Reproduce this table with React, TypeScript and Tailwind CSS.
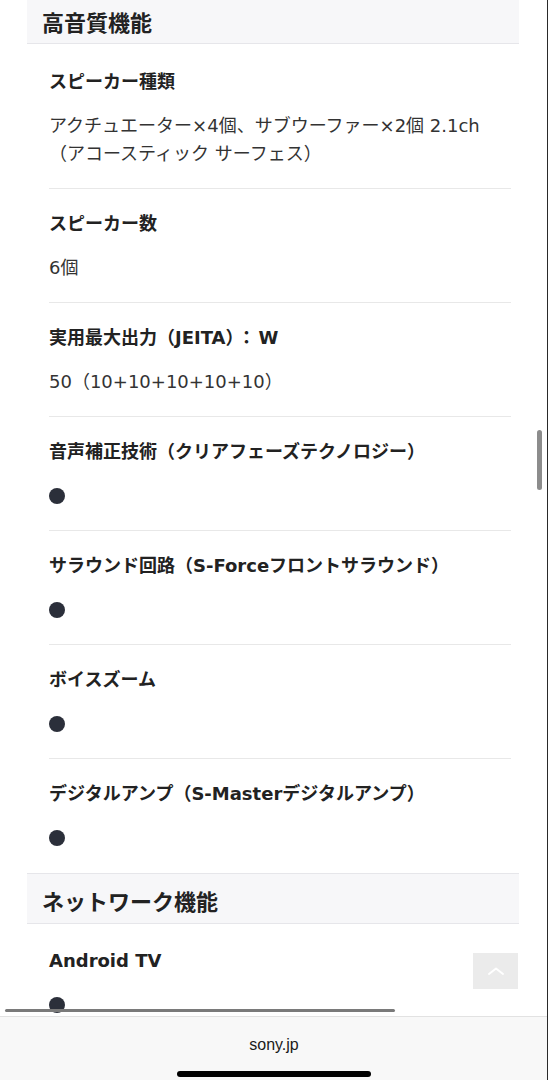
import React from "react";

const FONT = '"DejaVu Sans", "Noto Sans CJK JP", sans-serif';

function SectionHeader({ title, className = "" }: { title: string; className?: string }) {
  return (
    <div
      className={`bg-[#f7f7f9] border-y border-[#e6e6ea] pl-[15px] pt-[12px] text-[22px] leading-[28px] font-bold text-[#222] ${className}`}
      style={{ fontFamily: '"Noto Sans CJK JP", sans-serif' }}
    >
      {title}
    </div>
  );
}

function Bullet() {
  return (
    <div className="h-[28px] flex items-center">
      <div className="w-[16px] h-[16px] rounded-full bg-[#2b2f3a]" />
    </div>
  );
}

function Row({
  title,
  children,
  top = "pt-[21px]",
  last = false,
}: {
  title: React.ReactNode;
  children: React.ReactNode;
  top?: string;
  last?: boolean;
}) {
  return (
    <div
      className={`ml-[22px] mr-[8px] pb-[20px] ${top} ${last ? "" : "border-b border-[#e8e8e8]"}`}
    >
      <div className="text-[18px] leading-[28px] font-bold text-[#222]">{title}</div>
      <div className="mt-[16px] text-[18px] leading-[28px] text-[#333]">{children}</div>
    </div>
  );
}

export default function App() {
  return (
    <div
      className="relative w-[548px] h-[1080px] bg-white overflow-hidden"
      style={{ fontFamily: FONT }}
    >
      <div className="h-[1016px] overflow-hidden">
        <div className="ml-[27px] w-[492px] -mt-[6px]">
          <SectionHeader title="高音質機能" className="pb-[8px]" />
          <Row title="スピーカー種類" top="pt-[24px]">
            アクチュエーター×4個、サブウーファー×2個 2.1ch
            <br />
            （アコースティック サーフェス）
          </Row>
          <Row title="スピーカー数">6個</Row>
          <Row title={<>実用最大出力（JEITA）<span className="mx-[3px]">：</span>W</>}>
            50（10+10+10+10+10）
          </Row>
          <Row title="音声補正技術（クリアフェーズテクノロジー）">
            <Bullet />
          </Row>
          <Row title="サラウンド回路（S-Forceフロントサラウンド）">
            <Bullet />
          </Row>
          <Row title="ボイスズーム">
            <Bullet />
          </Row>
          <Row title="デジタルアンプ（S-Masterデジタルアンプ）" last>
            <Bullet />
          </Row>
          <SectionHeader title="ネットワーク機能" className="mt-px pb-[9px]" />
          <Row title="Android TV" top="pt-[23px]">
            <Bullet />
          </Row>
        </div>
      </div>

      <div className="h-[64px] bg-[#f8f8f8] border-t border-[#e2e2e2] flex flex-col items-center">
        <div
          className="pt-[18px] text-[16px] leading-[20px] text-[#1a1a1a]"
          style={{ fontFamily: '"Liberation Sans", sans-serif' }}
        >
          sony.jp
        </div>
        <div className="mt-[16px] w-[194px] h-[6px] rounded-full bg-black" />
      </div>

      {/* page loading progress line */}
      <div className="absolute left-[5px] top-[1009px] w-[390px] h-[3px] rounded-full bg-[#7a7a7a]" />

      {/* scroll to top */}
      <div className="absolute left-[473px] top-[953px] w-[45px] h-[36px] bg-[#ebebeb] flex items-center justify-center">
        <svg width="18" height="10" viewBox="0 0 18 10" fill="none">
          <path d="M2 8 L9 2.5 L16 8" stroke="#ffffff" strokeWidth="2" strokeLinecap="round" strokeLinejoin="round" />
        </svg>
      </div>

      {/* scrollbar */}
      <div className="absolute left-[537px] top-[430px] w-[5px] h-[60px] rounded-full bg-[#8c8c8c]" />

      {/* right edge */}
      <div className="absolute right-0 top-0 w-px h-full bg-[#2a2a2a]" />
    </div>
  );
}
